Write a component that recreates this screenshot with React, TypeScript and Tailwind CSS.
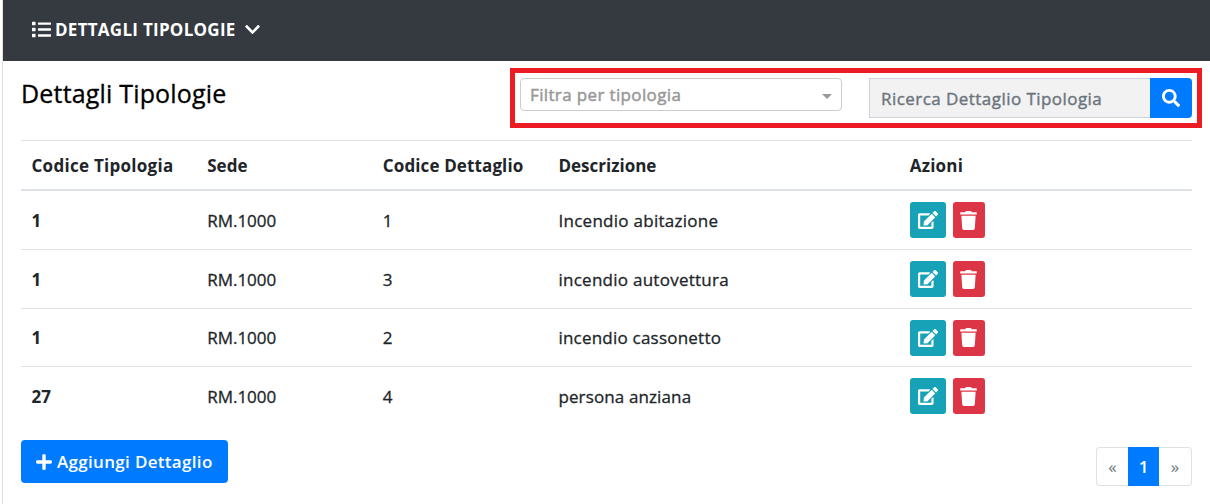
import { FaList, FaChevronDown, FaSearch, FaEdit, FaTrash, FaPlus } from 'react-icons/fa';

const rows = [
  { tipologia: '1', sede: 'RM.1000', dettaglio: '1', descrizione: 'Incendio abitazione', track: 'tracking-[0.27px]', height: 'h-[59px]' },
  { tipologia: '1', sede: 'RM.1000', dettaglio: '3', descrizione: 'incendio autovettura', track: 'tracking-[0.26px]', height: 'h-[59px]' },
  { tipologia: '1', sede: 'RM.1000', dettaglio: '2', descrizione: 'incendio cassonetto', track: 'tracking-[0.22px]', height: 'h-[58px]' },
  { tipologia: '27', sede: 'RM.1000', dettaglio: '4', descrizione: 'persona anziana', track: 'tracking-[0.12px]', height: 'h-[59px]' },
];

const columns = 'grid grid-cols-[15fr_15fr_15fr_30fr_25fr] *:pl-[10.5px]';

function NavHeader() {
  return (
    <header className="flex h-[61px] items-center bg-[#343a40] pb-[2px] pl-[29px] text-white">
      <FaList className="size-[19px]" />
      <span className="ml-[4px] w-[181px] whitespace-nowrap text-[17px] font-bold tracking-[0.27px]">DETTAGLI TIPOLOGIE</span>
      <FaChevronDown className="ml-[8px] size-[17px]" />
    </header>
  );
}

function Filters() {
  return (
    <div className="mt-[7px] flex h-[60px] w-[692px] items-start border-[5px] border-[#ed1c24] pl-[5px] pt-[5px]">
      <div className="flex h-[33px] w-[322px] items-center justify-between rounded-[4px] border border-[#ccc] pl-[9px] pr-[9px] text-[17px] text-[#999] [-webkit-text-stroke:0.5px]">
        <span className="tracking-[0.36px]">Filtra per tipologia</span>
        <span className="mt-[3px] border-x-[5px] border-t-[5px] border-x-transparent border-t-[#999]" />
      </div>
      <div className="ml-[27px] flex h-10 items-center">
        <div className="flex h-10 w-[281px] items-center border border-r-0 border-[#ced4da] bg-[#f2f2f2] pl-[11px] pt-[2px] text-[17px] text-[#6c757d] [-webkit-text-stroke:0.4px]">
          <span className="tracking-[0.45px]">Ricerca Dettaglio Tipologia</span>
        </div>
        <button className="flex h-10 w-[42px] items-center justify-center rounded-r-[4px] bg-[#007bff] text-white">
          <FaSearch className="size-[18px]" />
        </button>
      </div>
    </div>
  );
}

function DetailsTable() {
  return (
    <div className="mt-3 text-[17px] text-[#212529]">
      <div className={`${columns} h-[51px] items-center border-b-2 border-t border-[#dee2e6] pt-[2px] font-bold`}>
        <span className="tracking-[0.27px]">Codice Tipologia</span>
        <span className="tracking-[0.1px]">Sede</span>
        <span className="tracking-[0.12px]">Codice Dettaglio</span>
        <span>Descrizione</span>
        <span className="tracking-[0.2px]">Azioni</span>
      </div>
      {rows.map((row) => (
        <div key={row.dettaglio} className={`${columns} ${row.height} items-center border-b border-[#dee2e6] last:border-transparent`}>
          <span className="pt-px font-bold">{row.tipologia}</span>
          <span className="pt-px [-webkit-text-stroke:0.3px]">{row.sede}</span>
          <span className="pt-px [-webkit-text-stroke:0.3px]">{row.dettaglio}</span>
          <span className={`pt-px [-webkit-text-stroke:0.3px] ${row.track}`}>{row.descrizione}</span>
          <div className="flex gap-[7px]">
            <button className="flex h-9 w-9 items-center justify-center rounded-[3px] bg-[#17a2b8] text-white">
              <FaEdit className="size-[20px]" />
            </button>
            <button className="flex h-9 w-8 items-center justify-center rounded-[3px] bg-[#dc3545] text-white">
              <FaTrash className="size-[19px]" />
            </button>
          </div>
        </div>
      ))}
    </div>
  );
}

function Footer() {
  return (
    <div className="mt-[14px] flex justify-between">
      <button className="flex h-[43px] w-[207px] items-center rounded-[4px] bg-[#007bff] pl-[14px] text-[17px] font-semibold text-white">
        <FaPlus className="size-[18px]" />
        <span className="ml-[4px] whitespace-nowrap tracking-[0.32px]">Aggiungi Dettaglio</span>
      </button>
      <nav className="mt-[7px] flex h-[39px] w-24 text-center text-[17px] font-medium leading-[37px] text-[#6c757d]">
        <span className="w-8 rounded-l-[4px] border border-r-0 border-[#dee2e6]">«</span>
        <span className="w-[31px] bg-[#007bff] pt-px font-semibold text-white">1</span>
        <span className="w-[33px] rounded-r-[4px] border border-l-0 border-[#dee2e6]">»</span>
      </nav>
    </div>
  );
}

export default function App() {
  return (
    <div className="h-[504px] overflow-hidden bg-white pl-[2px] font-['Open_Sans','Noto_Sans',sans-serif]">
      <div className="h-full border-l border-[#dfdfdf]">
        <NavHeader />
        <main className="pl-[18px] pr-[18px]">
          <div className="-mr-[10px] flex justify-between">
            <h1 className="mt-[14px] whitespace-nowrap text-[25px] leading-9 tracking-[0.18px] text-black [-webkit-text-stroke:0.3px]">Dettagli Tipologie</h1>
            <Filters />
          </div>
          <DetailsTable />
          <Footer />
        </main>
      </div>
    </div>
  );
}
